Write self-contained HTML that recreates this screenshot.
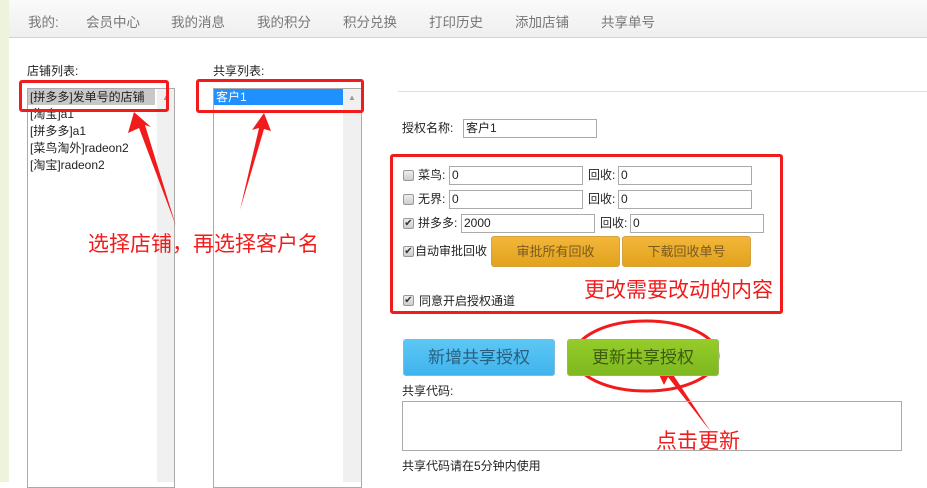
<!DOCTYPE html>
<html><head><meta charset="utf-8"><style>
*{margin:0;padding:0;box-sizing:border-box}
body{width:927px;height:482px;overflow:hidden;background:#fff;position:relative;font-family:"Liberation Sans","Noto Sans CJK SC",sans-serif;font-size:12px;color:#222}
.a{position:absolute}
.l{line-height:19px}
.strip{left:0;top:0;width:9px;height:482px;background:#eef3dc}
.nav{left:9px;top:0;width:918px;height:38px;background:linear-gradient(#fafafa,#efefef);border-bottom:1px solid #d4d4d4}
.nav span{position:absolute;top:11px;font-size:13.5px;color:#777}
.lb{border:1px solid #aaa;background:#fff}
.sb{background:#f0f0f0}
.red{border:3px solid #f21b1b;border-radius:3px}
.inp{border:1px solid #aaa;height:19px;padding-left:2px;line-height:17px;font-size:12px;background:#fff}
.cb{width:11px;height:11px;border:1px solid #999;border-radius:2px;background:linear-gradient(#eee,#ccc);font-size:10px;line-height:9px;text-align:center;color:#333}
.ob{background:linear-gradient(#f2b63a,#e2a21c);border:1px solid #d5a040;border-radius:3px;color:#7a5a20;font-size:13px;text-align:center;line-height:30px}
.rt{color:#f21b1b;font-size:21px;line-height:24px}
</style></head><body>
<div class="a strip"></div>
<div class="a nav">
<span style="left:19px">我的:</span><span style="left:77px">会员中心</span><span style="left:162px">我的消息</span><span style="left:248px">我的积分</span><span style="left:334px">积分兑换</span><span style="left:420px">打印历史</span><span style="left:506px">添加店铺</span><span style="left:592px">共享单号</span>
</div>
<div class="a" style="left:27px;top:62px">店铺列表:</div>
<div class="a" style="left:213px;top:62px">共享列表:</div>
<div class="a lb" style="left:27px;top:88px;width:148px;height:400px"></div>
<div class="a sb" style="left:157px;top:89px;width:17px;height:393px"></div>
<div class="a" style="left:28px;top:89px;width:127px;height:16px;background:#c8c8c8"></div>
<div class="a" style="left:30px;top:89px;line-height:17px">[拼多多]发单号的店铺<br>[淘宝]a1<br>[拼多多]a1<br>[菜鸟淘外]radeon2<br>[淘宝]radeon2</div>
<div class="a lb" style="left:213px;top:88px;width:149px;height:400px"></div>
<div class="a sb" style="left:343px;top:89px;width:18px;height:393px"></div>
<div class="a" style="left:214px;top:89px;width:129px;height:16px;background:#1e90ff;color:#fff;padding-left:2px;line-height:16px">客户1</div>
<div class="a" style="left:162px;top:93px;color:#999;font-size:8px">▲</div>
<div class="a" style="left:348px;top:93px;color:#999;font-size:8px">▲</div>
<div class="a red" style="left:19px;top:80px;width:150px;height:32px"></div>
<div class="a red" style="left:196px;top:79px;width:168px;height:34px"></div>
<svg class="a" style="left:0;top:0" width="927" height="482">
<polygon points="134,112 128,133 139,128 176,226 145,125 151,127" fill="#f21b1b"/>
<polygon points="264,113 252,130 259,128 240,210 264,129 271,131" fill="#f21b1b"/>
<polygon points="652,360 664,385 668,377 711,432 672,373 680,370" fill="#f21b1b"/>
<ellipse cx="646" cy="356" rx="72" ry="35" fill="none" stroke="#f21b1b" stroke-width="3"/>
</svg>
<div class="a rt" style="left:88px;top:233px">选择店铺，再选择客户名</div>
<div class="a" style="left:398px;top:91px;width:529px;height:1px;background:#ddd"></div>
<div class="a l" style="left:402px;top:119px">授权名称:</div>
<div class="a inp" style="left:463px;top:119px;width:134px">客户1</div>
<div class="a red" style="left:390px;top:154px;width:393px;height:160px"></div>
<div class="a cb" style="left:403px;top:170px"></div><div class="a l" style="left:418px;top:166px">菜鸟:</div>
<div class="a inp" style="left:449px;top:166px;width:134px">0</div><div class="a l" style="left:588px;top:166px">回收:</div>
<div class="a inp" style="left:618px;top:166px;width:134px">0</div>
<div class="a cb" style="left:403px;top:194px"></div><div class="a l" style="left:418px;top:190px">无界:</div>
<div class="a inp" style="left:449px;top:190px;width:134px">0</div><div class="a l" style="left:588px;top:190px">回收:</div>
<div class="a inp" style="left:618px;top:190px;width:134px">0</div>
<div class="a cb" style="left:403px;top:218px">✔</div><div class="a l" style="left:418px;top:214px">拼多多:</div>
<div class="a inp" style="left:461px;top:214px;width:134px">2000</div><div class="a l" style="left:600px;top:214px">回收:</div>
<div class="a inp" style="left:630px;top:214px;width:134px">0</div>
<div class="a cb" style="left:403px;top:246px">✔</div><div class="a l" style="left:415px;top:242px">自动审批回收</div>
<div class="a ob" style="left:491px;top:236px;width:129px;height:31px">审批所有回收</div>
<div class="a ob" style="left:622px;top:236px;width:129px;height:31px">下载回收单号</div>
<div class="a rt" style="left:584px;top:279px">更改需要改动的内容</div>
<div class="a cb" style="left:403px;top:295px">✔</div><div class="a l" style="left:419px;top:292px">同意开启授权通道</div>
<div class="a" style="left:403px;top:339px;width:152px;height:37px;border:1px solid #7bbde0;border-radius:3px;background:linear-gradient(#5cc7f5,#3fb4ec);color:#2a5f80;font-size:17px;text-align:center;line-height:35px">新增共享授权</div>
<div class="a" style="left:567px;top:339px;width:152px;height:37px;border:1px solid #9ab860;border-radius:3px;background:linear-gradient(#95cc2a,#7eb81e);color:#3e5a10;font-size:17px;text-align:center;line-height:35px">更新共享授权</div>
<div class="a" style="left:402px;top:382px">共享代码:</div>
<div class="a" style="left:402px;top:401px;width:500px;height:50px;border:1px solid #aaa"></div>
<div class="a rt" style="left:656px;top:430px">点击更新</div>
<div class="a" style="left:402px;top:457px">共享代码请在5分钟内使用</div>
</body></html>
